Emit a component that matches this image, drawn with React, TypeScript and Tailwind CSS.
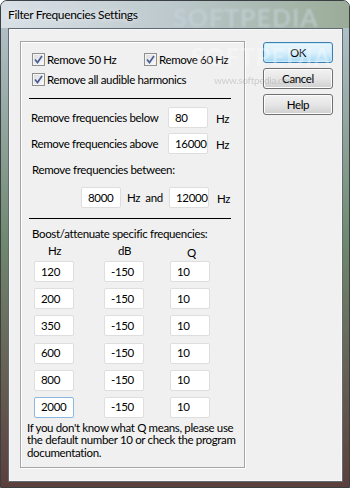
const font = "font-['Lato','Liberation_Sans',sans-serif] tracking-[-0.35px]";

function Check({ label }: { label: string }) {
  return (
    <div className="flex items-center h-[13px]">
      <span className="w-[13px] h-[13px] border border-[#8e8f8f] bg-gradient-to-br from-[#dcdcdc] to-[#fafafa] flex items-center justify-center shadow-[inset_0_0_0_1px_#f4f4f4]">
        <svg width="9" height="9" viewBox="0 0 9 9">
          <path d="M1 4.5 L3.5 7.5 L8 1" fill="none" stroke="#4a5f97" strokeWidth="1.7" />
        </svg>
      </span>
      <span className="ml-[2px] text-[11.5px] leading-[14px] text-black">{label}</span>
    </div>
  );
}

function Field({ value, w = 'w-[40px]', focus = false }: { value: string; w?: string; focus?: boolean }) {
  return (
    <div
      className={`${w} h-[21px] bg-white rounded-[2px] border flex items-center pl-[6px] text-[11.5px] text-black ${
        focus ? 'border-[#8cb7e0]' : 'border-[#dedede]'
      }`}
    >
      {value}
    </div>
  );
}

function Btn({ label, def = false }: { label: string; def?: boolean }) {
  return (
    <div
      className={`w-[70px] h-[21px] rounded-[3px] border flex items-center justify-center text-[11.5px] text-black ${
        def
          ? 'border-[#3c7fb1] bg-gradient-to-b from-[#eaf6fd] via-[#d9f0fc] to-[#a7d9f5] shadow-[inset_0_0_0_1px_#c8ebfb]'
          : 'border-[#707070] bg-gradient-to-b from-[#f2f2f2] via-[#e6e6e6] to-[#cfcfcf] shadow-[inset_0_0_0_1px_#fcfcfc]'
      }`}
    >
      {label}
    </div>
  );
}

const rows = ['120', '200', '350', '600', '800', '2000'];

export default function App() {
  return (
    <div
      className={`${font} w-[350px] h-[488px] relative overflow-hidden rounded-t-[7px] border border-[#3a3f44] bg-gradient-to-b from-[#b9c6d2] via-[#6f876d] to-[#5b3f3c]`}
    >
      {/* title bar */}
      <div className="h-[27px] flex items-center pl-[7px] bg-gradient-to-r from-[#d9e1e7] via-[#bcc8cc] to-[#9aac98] relative">
        <span className="text-[12px] text-black [text-shadow:0_0_6px_#ffffff]">Filter Frequencies Settings</span>
        <span className="absolute left-[172px] top-[-2px] text-[25px] font-bold tracking-[1px] text-[#c7d3da] opacity-60 blur-[1px]">
          SOFTPEDIA
        </span>
      </div>

      {/* client area */}
      <div className="absolute left-[7px] top-[27px] w-[335px] h-[454px] border border-[#5f6a72] bg-[#f0f0f0] shadow-[inset_0_0_0_1px_#f8f8f8]">
        <div className="flex pt-[12px] pl-[11px]">
          {/* group box */}
          <div className="w-[225px] h-[427px] border border-[#a5a5a5] shadow-[inset_1px_1px_0_#ffffff,1px_1px_0_#ffffff] flex flex-col text-[11.5px] leading-[14px] text-black">
            <div className="mt-[11px] ml-[11px] flex">
              <div className="w-[112px]">
                <Check label="Remove 50 Hz" />
              </div>
              <Check label="Remove 60 Hz" />
            </div>
            <div className="mt-[7px] ml-[11px]">
              <Check label="Remove all audible harmonics" />
            </div>
            <div className="mt-[12px] ml-[8px] w-[202px] h-px bg-black" />

            <div className="mt-[8px] ml-[10px] flex items-center">
              <span className="w-[137px] whitespace-nowrap">Remove frequencies below</span>
              <Field value="80" />
              <span className="ml-[8px] mt-[3px]">Hz</span>
            </div>
            <div className="mt-[5px] ml-[10px] flex items-center">
              <span className="w-[137px] whitespace-nowrap">Remove frequencies above</span>
              <Field value="16000" />
              <span className="ml-[8px] mt-[3px]">Hz</span>
            </div>
            <div className="mt-[9px] ml-[11px]">Remove frequencies between:</div>
            <div className="mt-[10px] ml-[60px] flex items-center">
              <Field value="8000" />
              <span className="ml-[6px] w-[42px] whitespace-nowrap">Hz&nbsp;&nbsp;and</span>
              <Field value="12000" />
              <span className="ml-[8px] mt-[3px]">Hz</span>
            </div>
            <div className="mt-[10px] ml-[8px] w-[202px] h-px bg-black" />

            <div className="mt-[8px] ml-[11px]">Boost/attenuate specific frequencies:</div>
            <div className="mt-[3px] flex">
              <span className="ml-[27px] w-[70px]">Hz</span>
              <span className="w-[69px]">dB</span>
              <span className="mt-[2px]">Q</span>
            </div>
            <div className="mt-[1px] ml-[13px] flex flex-col gap-[6.2px]">
              {rows.map((r, i) => (
                <div key={r} className="flex">
                  <Field value={r} focus={i === 5} />
                  <div className="ml-[30px]">
                    <Field value="-150" />
                  </div>
                  <div className="ml-[26px]">
                    <Field value="10" />
                  </div>
                </div>
              ))}
            </div>
            <p className="mt-[4px] ml-[6px] w-[215px] leading-[12.5px]">
              If you don't know what Q means, please use the default number 10 or check the program
              documentation.
            </p>
          </div>

          {/* buttons */}
          <div className="ml-[18px] mt-[1px] flex flex-col gap-[5px]">
            <Btn label="OK" def />
            <Btn label="Cancel" />
            <Btn label="Help" />
          </div>
        </div>
      </div>

      {/* watermark */}
      <span className="absolute left-[190px] top-[38px] text-[24px] font-bold tracking-[1px] text-white opacity-30 pointer-events-none">
        SOFTPEDIA
      </span>
      <span className="absolute left-[213px] top-[72px] text-[10px] text-[#9a9a9a] opacity-40 pointer-events-none">
        www.softpedia.com
      </span>
    </div>
  );
}
